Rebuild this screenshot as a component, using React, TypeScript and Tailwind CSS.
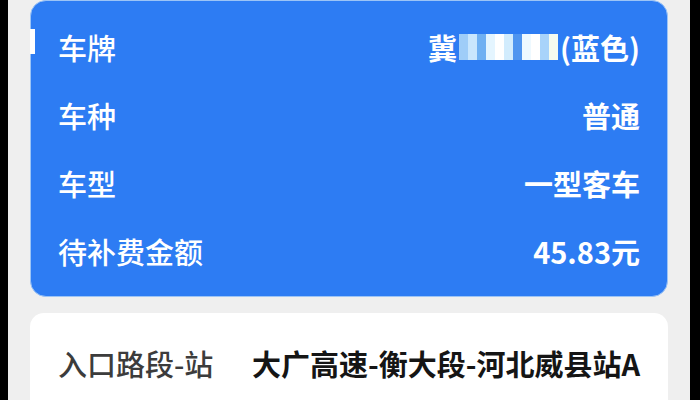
import React from "react";

const rows = [
  { label: "车牌", value: "plate" },
  { label: "车种", value: "普通" },
  { label: "车型", value: "一型客车" },
  { label: "待补费金额", value: "45.83元" },
];

const blocks = [
  "#9fcdf8", "#c9e6fd", "#6fb0f2", "#e4f5ff", "#ffffff", "#d2ecfd", "#4f95ef", "#eef9ff", "#ffffff", "#a8d3fa", "#f5fbef",
];

function Plate() {
  return (
    <span className="flex items-center">
      <span>冀</span>
      <span className="ml-[2px] mr-[2px] flex h-[26px] items-stretch">
        {blocks.map((c, i) => (
          <span key={i} className="w-[9px]" style={{ background: c }} />
        ))}
      </span>
      <span>(蓝色)</span>
    </span>
  );
}

export default function App() {
  return (
    <div
      className="flex h-[400px] w-[700px] overflow-hidden bg-black"
      style={{ fontFamily: '"Noto Sans CJK SC", "Noto Sans", sans-serif' }}
    >
      <div className="ml-[8px] flex w-[682px] flex-col bg-[#efefef] px-[22px]">
        <div className="relative rounded-[16px] border border-[#9cc4f6] bg-[#2d7cf3] px-[27px] pb-[11px] pt-[12px] text-white">
          <div className="absolute left-[-1px] top-[28px] h-[25px] w-[5px] bg-white" />
          {rows.map((r) => (
            <div key={r.label} className="flex h-[68px] items-center justify-between text-[29px] leading-none">
              <span className="font-medium">{r.label}</span>
              <span className="font-semibold">{r.value === "plate" ? <Plate /> : r.value}</span>
            </div>
          ))}
        </div>
        <div className="mt-[16px] rounded-[14px] bg-white px-[28px] pb-[40px] pt-[16px]">
          <div className="flex h-[68px] items-center justify-between text-[29px] leading-none">
            <span className="font-medium text-[#3c3c3c]">入口路段-站</span>
            <span className="font-semibold text-[#151515]">大广高速-衡大段-河北威县站A</span>
          </div>
        </div>
      </div>
    </div>
  );
}
